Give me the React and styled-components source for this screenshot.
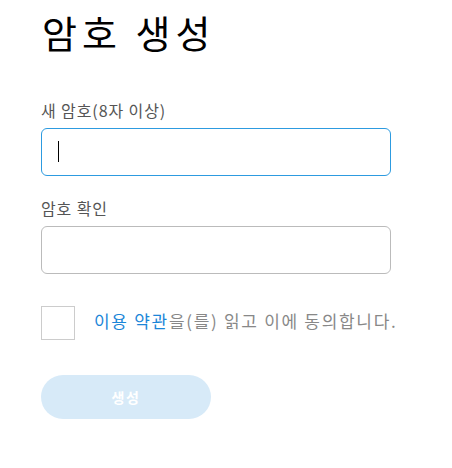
import React from 'react';
import styled, { createGlobalStyle } from 'styled-components';

const Global = createGlobalStyle`
  body {
    margin: 0;
    background: #fff;
    font-family: "Noto Sans CJK KR", "Noto Sans", sans-serif;
  }
`;

const Page = styled.div`
  padding: 5px 0 0 41px;
  width: 350px;
  display: flex;
  flex-direction: column;
`;

const Title = styled.h1`
  margin: 0 0 0 1px;
  font-size: 38px;
  font-weight: 400;
  line-height: 54px;
  color: #000;
  letter-spacing: 5px;
`;

const Field = styled.div`
  display: flex;
  flex-direction: column;
  margin-top: ${p => p.top}px;
`;

const Label = styled.label`
  font-size: 16px;
  line-height: 22px;
  color: #555;
  margin-bottom: 7px;
  letter-spacing: 0.9px;
`;

const InputWrap = styled.div`
  position: relative;
  width: 350px;
`;

const Input = styled.input`
  box-sizing: border-box;
  width: 350px;
  height: 48px;
  border: 1px solid ${p => (p.$active ? '#2d9be0' : '#bbbbbb')};
  border-radius: 6px;
  padding: 0 16px;
  font-size: 18px;
  outline: none;
  caret-color: transparent;
  background: #fff;
  display: block;
`;

const Caret = styled.span`
  position: absolute;
  left: 17px;
  top: 13px;
  width: 1px;
  height: 21px;
  background: #000;
`;

const Agree = styled.div`
  display: flex;
  align-items: center;
  gap: 19px;
  margin-top: 32px;
`;

const Box = styled.span`
  box-sizing: border-box;
  width: 34px;
  height: 34px;
  border: 1px solid #cccccc;
  flex: none;
`;

const AgreeText = styled.span`
  font-size: 17px;
  line-height: 22px;
  color: #888;
  letter-spacing: 1.7px;
  margin-top: -4px;
  white-space: nowrap;
`;

const Link = styled.span`
  color: #1b86d8;
`;

const Submit = styled.button`
  margin-top: 35px;
  width: 170px;
  height: 44px;
  border: none;
  border-radius: 22px;
  background: #d7eaf8;
  color: #fff;
  font-family: inherit;
  font-size: 14px;
  font-weight: 700;
  letter-spacing: 1.5px;
`;

export default function App() {
  return (
    <>
      <Global />
      <Page>
        <Title>암호 생성</Title>
        <Field top={40}>
          <Label>새 암호(8자 이상)</Label>
          <InputWrap>
            <Input type="password" $active />
            <Caret />
          </InputWrap>
        </Field>
        <Field top={21}>
          <Label>암호 확인</Label>
          <InputWrap>
            <Input type="password" />
          </InputWrap>
        </Field>
        <Agree>
          <Box />
          <AgreeText>
            <Link>이용 약관</Link>을(를) 읽고 이에 동의합니다.
          </AgreeText>
        </Agree>
        <Submit disabled>생성</Submit>
      </Page>
    </>
  );
}
